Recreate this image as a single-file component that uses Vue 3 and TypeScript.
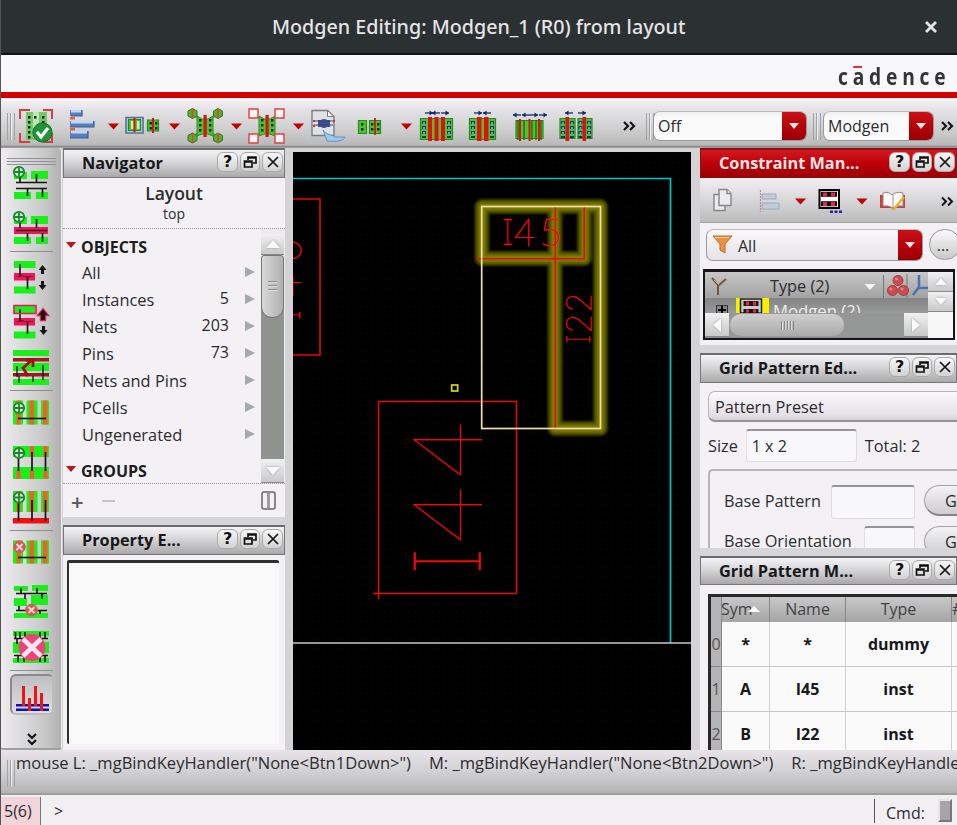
<script setup lang="ts">
interface Shape { d: string; fill?: string; stroke?: string; sw?: number }
interface Tool { x: number; w: number; shapes: Shape[]; arrow?: boolean }
interface SideTool { y: number; shapes: Shape[]; sep?: boolean; pressed?: boolean }

const GREEN = '#18f018'
const LEAF = '#4cc431'
const DARK = '#151515'
const PINK = '#f0145a'
const RED = '#e01010'

const box = (x: number, y: number, w: number, h: number): string => `M${x} ${y}h${w}v${h}h${-w}z`
const fill = (color: string, ...rects: number[][]): Shape => ({
  d: rects.map(([x, y, w, h]) => box(x, y, w, h)).join(''), fill: color,
})
const line = (color: string, sw: number, d: string): Shape => ({ d, stroke: color, sw })
const disc = (cx: number, cy: number, r: number, color: string, stroke?: string, sw?: number): Shape => ({
  d: `M${cx - r} ${cy}a${r} ${r} 0 1 0 ${2 * r} 0a${r} ${r} 0 1 0 ${-2 * r} 0z`, fill: color, stroke, sw,
})
const plus = (cx: number, cy: number): Shape[] => [
  disc(cx, cy, 5.2, '#d4f3d0', '#17862a', 1.8),
  line('#17862a', 1.8, `M${cx} ${cy - 4.5}v9M${cx - 4.5} ${cy}h9`),
]
const remove = (cx: number, cy: number): Shape[] => [
  disc(cx, cy, 5.8, '#dc5550', '#c46058', 1),
  line('#f8dede', 1.8, `M${cx - 3} ${cy - 3}l6 6M${cx + 3} ${cy - 3}l-6 6`),
]
const chip = (x: number, y: number, w: number, h: number): Shape[] => [
  { d: box(x + 0.5, y + 0.5, w - 1, h - 1), fill: LEAF, stroke: '#288a1c', sw: 1.2 },
]
const dots = (x: number, y: number, n: number): Shape =>
  fill('#10251a', ...Array.from({ length: n }, (_, i) => [x, y + i * 5, 2.4, 2.6]))
const smallArrow = (x: number, y: number, dir: number): Shape[] => [
  line('#0a2a70', 1.3, `M${x - 4} ${y}h8`),
  { d: `M${x + 4 * dir} ${y}l${-3.5 * dir} -2.6v5.2z`, fill: '#0a2a70' },
]
const blueDots = (x: number): Shape[] => [
  fill('#0c3560', [x - 2, 121, 4, 3], [x - 2, 126, 4, 3], [x - 2, 131, 4, 3], [x - 2, 136, 4, 2]),
  fill('#67a2e8', [x - 1, 122, 2, 2], [x - 1, 127, 2, 2], [x - 1, 132, 2, 2]),
]
const cross = (cx: number): Shape[] => [
  { d: `M${cx - 8} 116l5 3h6l5-3v20l-5-2h-6l-5 2z`, fill: LEAF, stroke: '#288a1c', sw: 1 },
  dots(cx - 6, 119, 3), dots(cx + 4, 119, 3),
  fill(RED, [cx - 1.5, 115, 3.2, 22]),
]
const hex = (cx: number, cy: number): Shape[] => [
  { d: `M${cx} ${cy - 5}l4.5 2.5v5l-4.5 2.5l-4.5-2.500v-5z`, fill: '#4bb336', stroke: '#287a20', sw: 1 },
  line('#e04a20', 1.8, `M${cx} ${cy - 5}v10`),
]

const tools: Tool[] = [
  { x: 16, w: 50, shapes: [
    line('#cf4040', 2, 'M20 119v-9h10M43 110h9v9M20 133v9h10M43 142h9v-9'),
    fill('#76c768', [26, 112, 21, 28]), fill('#bfe5b5', [33, 112, 6, 26]), dots(28, 116, 5), dots(42, 116, 4), dots(34, 116, 1),
    disc(42.5, 132.5, 9.6, '#209438', '#116d25', 1), line('#ffffff', 3.2, 'M37 132l4 5l7-9'),
  ] },
  { x: 66, w: 56, arrow: true, shapes: [
    fill('#567fc0', [70, 110, 12, 6], [70, 121, 24, 6], [70, 131, 18, 7]),
    fill('#bed9f5', [71, 110, 10, 2.4], [71, 121, 22, 2.4], [71, 131, 16, 2.6]),
    fill('#f4593b', [70, 117, 5, 2.6], [70, 128, 5, 2.6]),
    line('#405d98', 1.2, 'M82 110v6h-11M94 121v6h-24M88 131v7h-18'),
  ] },
  { x: 122, w: 61, arrow: true, shapes: [
    { d: box(126, 117.5, 17, 15.5), fill: '#b8cbe0', stroke: '#5770a0', sw: 1.6 },
    ...chip(128, 119, 13, 12), fill('#d7edbb', [131, 121, 2.5, 8], [137, 121, 2.5, 8]), line(RED, 2, 'M134.5 118v14'),
    ...chip(147, 119.5, 12, 12), dots(149.5, 122, 2), dots(155, 122, 2), line(RED, 2, 'M153 118v15'),
  ] },
  { x: 183, w: 62, arrow: true, shapes: [
    line('#81917f', 1.5, 'M192 113l26 25M218 113l-26 25'),
    ...cross(205), ...hex(192.5, 113.5), ...hex(218, 113.5), ...hex(192.5, 138), ...hex(218, 138),
  ] },
  { x: 245, w: 62, arrow: true, shapes: [
    ...cross(267), ...[[249, 109], [275, 109], [249, 134], [275, 134]].map(([x, y]) => ({
      d: box(x, y, 9, 9), fill: '#fff4f4', stroke: '#df3f3f', sw: 1.4 })),
  ] },
  { x: 307, w: 46, shapes: [
    { d: 'M312 110.5h15.5l6.5 6v19h-22z', fill: '#dfe1e3', stroke: '#757980', sw: 1.3 },
    { d: 'M327.5 110.5v6h6.5z', fill: '#ffffff', stroke: '#757980', sw: 1 },
    disc(324, 123.5, 4.6, '#3d4f91'), fill('#3d4f91', [318, 120, 12, 7]), line('#34447d', 1.2, 'M314 121h20M314 125h19'),
    line('#cc2f47', 2, 'M314 120v2M334 120v2M314 125v2'),
    { d: 'M323 130c3 5 8 4 12 7h10c-1 4-9 5-18 4z', fill: '#9fc7ec', stroke: '#4e86bd', sw: 0.8 },
  ] },
  { x: 353, w: 62, arrow: true, shapes: [
    ...chip(358, 120, 9, 14), dots(361, 123, 2), ...chip(369, 120, 12, 14), dots(371, 123, 2), dots(377, 123, 2),
    line(RED, 1.8, 'M375 118v17'),
  ] },
  { x: 415, w: 46, shapes: [
    ...smallArrow(429, 113, 1), ...smallArrow(436, 113, -1), ...smallArrow(445, 113, 1),
    ...chip(420, 118, 33, 22), ...blueDots(424), ...blueDots(449),
    fill(RED, [428, 117, 4, 24], [434.5, 117, 4, 24], [441, 117, 4, 24]),
  ] },
  { x: 461, w: 48, shapes: [
    ...smallArrow(478, 113, 1), ...smallArrow(487, 113, -1),
    ...chip(469, 118, 27, 22), ...blueDots(473), ...blueDots(492), fill(RED, [477, 117, 4.5, 24], [484, 117, 4.5, 24]),
  ] },
  { x: 509, w: 45, shapes: [
    ...smallArrow(517, 115, -1), ...smallArrow(526, 115, -1), ...smallArrow(534, 115, 1), ...smallArrow(543, 115, 1),
    ...chip(515.5, 120, 28, 19), line('#286a17', 1.4, 'M518 120v20M524 120v20M532 120v20M536 120v20M541 120v20'),
    line(RED, 2, 'M520 119v22M529.5 119v22M539 119v22'),
  ] },
  { x: 554, w: 60, shapes: [
    ...smallArrow(569, 113, -1), ...smallArrow(582, 113, 1),
    ...chip(559.5, 118, 16, 21), ...chip(577.5, 118, 15, 21), ...blueDots(563), ...blueDots(572), ...blueDots(580.500), ...blueDots(589),
    fill(RED, [565.5, 117, 3.6, 24], [582.5, 117, 3.6, 24]),
  ] },
]

const rows = (dy: number, wire: string): Shape[] => [
  fill(GREEN, [14, 172 + dy, 13, 7], [31, 171 + dy, 17, 8], [14, 192 + dy, 17, 7], [36, 192 + dy, 12, 7]),
  ...(wire === PINK ? [fill(PINK, [14, 227, 34, 7])] : []),
  line(DARK, 1.4, wire === PINK ? 'M16 230.5h31' : 'M16 182.5h31M16 188.5h31'),
  line(DARK, 1.6, `M20 ${176 + dy}v7M36.5 ${174 + dy}v9M27.5 ${188 + dy}v8M42.5 ${188 + dy}v9`),
]
const move = (dy: number): Shape[] => [
  fill(GREEN, [14, 261 + dy, 21.5, 7], [14, 286.5 + dy, 21.5, 7]),
  fill(PINK, [14, 273 + dy, 21, 7.5]), line('#7a0a30', 1.2, `M16 ${276.5 + dy}h4l2-1l2 1h9`),
  line(DARK, 1.6, `M20 ${264 + dy}v12M27.5 ${277 + dy}v12`),
]
const fingers = (y: number, h: number): Shape[] => [
  fill(GREEN, [13, y, 10, h], [26.5, y, 11, h], [41, y, 8, h]),
  fill('#f0602c', [16.5, y, 4, h], [29.5, y, 4.5, h], [43, y, 4.5, h]),
]

const sideTools: SideTool[] = [
  { y: 161, shapes: [...rows(0, DARK), ...plus(19, 172)] },
  { y: 206, sep: true, shapes: [...rows(45, PINK), ...plus(19, 217)] },
  { y: 255, shapes: [...move(0), { d: 'M42.5 265l-4 5h2.5v4h3v-4h2.5zM42.5 290l-4-5h2.5v-4h3v4h2.5z', fill: DARK }] },
  { y: 300, shapes: [
    ...move(45), line(PINK, 1.6, 'M14 305.5h22v8h-22z'),
    { d: 'M43 309.500l-4.500 5.500h2.500v5h4v-5h2.500z', fill: DARK, stroke: PINK, sw: 2.400 },
    { d: 'M43 309.500l-4.500 5.500h2.500v5h4v-5h2.500zM43.500 335l-4-5h2.500v-4h3v4h2.500z', fill: DARK },
  ] },
  { y: 345, sep: true, shapes: [
    fill(GREEN, [13, 350, 36, 6], [13, 363, 36, 8], [13, 379, 36, 6]),
    fill('#a01822', [13, 358, 36, 3.5], [13, 373, 36, 3.5]),
    line(DARK, 1.3, 'M17 366v11M19 376v7M33 376v6M43 365v15'),
    line('#a01010', 2.8, 'M28 376l-5-8l9-8M26 360h7v7'),
  ] },
  { y: 395, shapes: [...fingers(400.5, 24), line(DARK, 1.6, 'M18 418.5h28'), ...plus(19, 408)] },
  { y: 440, shapes: [
    fill(GREEN, [13, 446, 36, 11], [13, 467, 36, 12]),
    fill('#f0602c', [16.5, 470, 4, 9], [30, 446, 4, 11], [30, 470, 4, 9], [43.5, 446, 4, 11], [43.5, 470, 4, 9]),
    line(DARK, 1.7, 'M18.5 457v14M32 452v19M45.5 452v19'), ...plus(19, 453),
  ] },
  { y: 485, sep: true, shapes: [
    ...fingers(491, 21), fill('#f01010', [13, 518, 36, 5.5]), line(DARK, 1.7, 'M18.5 500v21M32 500v21M45.5 500v21'), ...plus(19, 497.5),
  ] },
  { y: 535, shapes: [...fingers(540.5, 23), line(DARK, 1.6, 'M18 557.5h28'), ...remove(19.5, 547)] },
  { y: 580, shapes: [
    fill(GREEN, [14, 586, 14, 5], [32, 585, 16, 6], [14, 598, 13, 8], [31, 595, 17, 10], [14, 613, 34, 5]),
    line(DARK, 1.6, 'M16 593.5h31M21 588v5M37 588v5M25 593v6M42 593v6M16 610.5h31M19 606v5M40 610v4'), ...remove(31.5, 610),
  ] },
  { y: 625, sep: true, shapes: [
    fill(GREEN, [13, 631, 36, 5], [13, 642, 36, 11], [13, 658, 36, 5]),
    line(DARK, 1.6, 'M14 638.5h34M14 655.5h34M15.5 632v7M20 632v6M25 632v6M40 632v6M45 632v6M17 638v6M18 655v7M24 655v7M40 655v7M45 655v7'),
    disc(32, 647.5, 13.500, '#ec4478'), line('#fbe8f2', 4.500, 'M23 639l18 17M41 639l-18 17'),
  ] },
  { y: 674, pressed: true, shapes: [
    fill('#1010b8', [16, 704, 33, 2.6], [16, 708.5, 33, 2.6]),
    fill('#f01414', [22, 686, 3, 20], [28, 698, 3, 13], [34, 686, 3, 20], [40, 693, 3, 18]),
  ] },
]

const objects = [
  { name: 'All', count: '' }, { name: 'Instances', count: '5' }, { name: 'Nets', count: '203' }, { name: 'Pins', count: '73' },
  { name: 'Nets and Pins', count: '' }, { name: 'PCells', count: '' }, { name: 'Ungenerated', count: '' },
]
const mapping = [
  { sym: '*', name: '*', type: 'dummy' }, { sym: 'A', name: 'I45', type: 'inst' }, { sym: 'B', name: 'I22', type: 'inst' },
]
const headButtons = ['?', 'restore', 'close']
</script>

<template>
  <div class="window">
    <header class="titlebar">
      <h1>Modgen Editing: Modgen_1 (R0) from layout</h1>
      <svg class="close" viewBox="0 0 14 14"><path d="M2 2l10 10M12 2L2 12" /></svg>
    </header>

    <div class="brandbar"><div class="brand">c<span class="macron">a</span>dence</div></div>

    <div class="toolbar">
      <i class="grip"></i>
      <div v-for="t in tools" :key="t.x" class="tool">
        <svg :width="t.w" height="50" :viewBox="`${t.x} 98 ${t.w} 50`">
          <path v-for="(s, i) in t.shapes" :key="i" :d="s.d" :fill="s.fill || 'none'" :stroke="s.stroke" :stroke-width="s.sw" />
          <path v-if="t.arrow" :d="`M${t.x + t.w - 14} 123.5h11l-5.5 6z`" fill="#c20000" />
        </svg>
      </div>
      <svg class="more" viewBox="0 0 13 10"><path d="M1 1l4 4-4 4M7 1l4 4-4 4" /></svg>
      <i class="grip second"></i>
      <div class="combo off"><span>Off</span><b></b></div>
      <i class="grip third"></i>
      <div class="combo modgen"><span>Modgen</span><b></b></div>
      <svg class="more last" viewBox="0 0 13 10"><path d="M1 1l4 4-4 4M7 1l4 4-4 4" /></svg>
    </div>

    <main class="body">
      <nav class="sidebar">
        <i class="hgrip"></i>
        <div v-for="s in sideTools" :key="s.y" class="side-tool" :class="{ sep: s.sep, pressed: s.pressed }">
          <svg width="62" height="45" :viewBox="`0 ${s.y} 62 45`">
            <path v-for="(p, i) in s.shapes" :key="i" :d="p.d" :fill="p.fill || 'none'" :stroke="p.stroke" :stroke-width="p.sw" />
          </svg>
        </div>
        <svg class="more down" viewBox="0 0 10 13"><path d="M1 1l4 4 4-4M1 7l4 4 4-4" /></svg>
      </nav>

      <section class="dock left">
        <div class="head"><h2>Navigator</h2>
          <span v-for="b in headButtons" :key="b" class="hb">
            <template v-if="b === '?'">?</template>
            <svg v-else-if="b === 'restore'" viewBox="0 0 14 14"><path d="M5 5V2h8v6h-3M5 3h8M1.500 6h7.500v6H1.500zM1 7h8" /></svg>
            <svg v-else viewBox="0 0 14 14"><path d="M2 2l10 10M12 2L2 12" /></svg>
          </span>
        </div>
        <div class="scope"><strong>Layout</strong><span>top</span></div>
        <div class="nav">
          <div class="tree">
            <div class="group"><i></i>OBJECTS</div>
            <div v-for="o in objects" :key="o.name" class="obj"><span>{{ o.name }}</span><em>{{ o.count }}</em><i></i></div>
            <div class="group second"><i></i>GROUPS</div>
          </div>
          <div class="scroll"><div class="sb up"></div><div class="thumb"><i></i></div><div class="track"></div><div class="sb dn"></div></div>
        </div>
        <div class="nav-actions"><b>+</b><i></i>
          <svg width="15" height="19" viewBox="0 0 15 19"><rect x="1" y="1" width="13" height="17" rx="2" /><path d="M7.500 2v15" stroke-width="3" stroke-opacity=".6" /></svg></div>
        <div class="head prop"><h2>Property E...</h2>
          <span v-for="b in headButtons" :key="b" class="hb">
            <template v-if="b === '?'">?</template>
            <svg v-else-if="b === 'restore'" viewBox="0 0 14 14"><path d="M5 5V2h8v6h-3M5 3h8M1.500 6h7.500v6H1.500zM1 7h8" /></svg>
            <svg v-else viewBox="0 0 14 14"><path d="M2 2l10 10M12 2L2 12" /></svg>
          </span>
        </div>
        <div class="prop-body"></div>
      </section>

      <svg class="canvas" viewBox="293 152 398 598">
        <defs>
          <pattern id="grid" width="6" height="9" patternUnits="userSpaceOnUse"><rect width="1" height="1" fill="#101010" /></pattern>
          <filter id="soft" x="-20%" y="-20%" width="140%" height="140%"><feGaussianBlur stdDeviation="1.3" /></filter>
        </defs>
        <rect x="293" y="152" width="398" height="598" fill="url(#grid)" />
        <path d="M293 178.5H670.5V643" class="cyan" />
        <path d="M293 643H691" class="pale" />
        <path d="M293 199H320V355H293" class="red" />
        <g filter="url(#soft)" class="glow" stroke-linejoin="round">
          <path d="M482 206.5H584.5V258.5H482zM555 206.5H600.5V428.5H555z" stroke="#3a3a00" stroke-width="15" />
          <path d="M482 206.5H584.5V258.5H482zM555 206.5H600.5V428.5H555z" stroke="#5c5c00" stroke-width="11" />
          <path d="M482 206.5H584.5V258.5H482zM555 206.5H600.5V428.5H555z" stroke="#808000" stroke-width="6" />
        </g>
        <path d="M378.5 599V401.5H516.5V593.5H373" class="red" />
        <path d="M476 258.8H584.3V206M555.3 206V430" class="red" />
        <rect x="481.7" y="206.5" width="118.8" height="222" class="wheat" />
        <rect x="451.7" y="385" width="6" height="6" class="yellow" />
        <g class="labels">
          <text class="mono thin" transform="translate(483.5 577) rotate(-90) scale(.47 1)" font-size="112">I</text>
          <text class="big" transform="translate(482 543) rotate(-90) scale(1 1)" font-size="98">4</text>
          <text class="big" transform="translate(482 478) rotate(-90) scale(1 1)" font-size="98">4</text>
          <text class="mono fine" transform="translate(501 246) scale(.52 1)" font-size="42">I</text>
          <text transform="translate(514 246)" font-size="37">4</text>
          <text transform="translate(539 246) scale(1.1 1)" font-size="37">5</text>
          <text class="mono fine" transform="translate(590.5 344) rotate(-90) scale(.42 1)" font-size="38">I</text>
          <text transform="translate(590.5 333) rotate(-90) scale(.92 1)" font-size="35">2</text>
          <text transform="translate(590.5 312) rotate(-90) scale(.92 1)" font-size="35">2</text>
          <text class="mono fine" transform="translate(300.5 320) rotate(-90) scale(.42 1)" font-size="41">I</text>
          <text transform="translate(300.5 297) rotate(-90)" font-size="37">4</text>
          <text transform="translate(300.5 261) rotate(-90)" font-size="37">0</text>
        </g>
      </svg>

      <section class="dock right">
        <div class="head active"><h2>Constraint Man...</h2>
          <span v-for="b in headButtons" :key="b" class="hb">
            <template v-if="b === '?'">?</template>
            <svg v-else-if="b === 'restore'" viewBox="0 0 14 14"><path d="M5 5V2h8v6h-3M5 3h8M1.500 6h7.500v6H1.500zM1 7h8" /></svg>
            <svg v-else viewBox="0 0 14 14"><path d="M2 2l10 10M12 2L2 12" /></svg>
          </span>
        </div>
        <svg class="cm-tools" viewBox="700 178 257 44">
          <g fill="#ececee" stroke="#85858a" stroke-width="1.4">
            <path d="M714 194.500h11v16h-11z" /><path d="M719 189.500h8l4 4v12h-12z" /><path d="M727 189.500v4h4" />
          </g>
          <path d="M760.500 190v22" stroke="#cf8780" stroke-width="1.2" stroke-dasharray="2 1" />
          <path d="M762 194h14v5h-14zM762 203h17v6h-17z" fill="#c0ccda" stroke="#9aacbf" />
          <path d="M795 198.500h11l-5.500 6zM856.500 198.500h11l-5.500 6z" fill="#c20000" />
          <path d="M819.500 190h19.500v18h-19.500z" fill="#fff" stroke="#000" stroke-width="2" />
          <path d="M821 191.800h16v5h-16zM821 201.200h16v5h-16z" fill="#000" />
          <path d="M823 192.500h4v4h-4zM831 192.500h4v4h-4zM823 202h4v4h-4zM831 202h4v4h-4z" fill="#f02048" />
          <path d="M830 210.500h3v2.600h-3zM834.500 210.500h3v2.600h-3zM839 210.500h3v2.600h-3z" fill="#2222a8" />
          <path d="M880 195v13h11l2 1l2-1h10v-13" fill="#c63e3e" />
          <path d="M883 193q6-2 9 2q4-4 11-2v13q-6-1-10 2q-5-3-10-2z" fill="#fafafa" stroke="#9b8585" />
          <path d="M893 195v13" stroke="#999" /><path d="M893 210l11-13" stroke="#e3b133" stroke-width="2.600" />
          <path d="M942 197.500l4 4-4 4M948 197.500l4 4-4 4" fill="none" stroke="#111" stroke-width="2" />
        </svg>
        <div class="filter-row">
          <div class="combo filter">
            <svg width="21" height="20" viewBox="0 0 21 20"><path d="M1 1h19l-7 8v9l-5-3V9z" fill="#e8923c" stroke="#b8702c" /><path d="M3 2.500h14" stroke="#fbd09b" /></svg>
            <span>All</span><b></b></div>
          <div class="round">...</div>
        </div>
        <div class="ctree">
          <svg class="ctree-ic" width="249" height="66" viewBox="705 272 249 66">
            <path d="M712 278l6 7v10M726 279l-8 7" fill="none" stroke="#70573f" stroke-width="2" />
            <path d="M714 280l5 5" stroke="#d0a060" />
            <path d="M864.500 284h11l-5.500 6z" fill="#f4f4f4" /><path d="M883.500 275v23M907 274v24" stroke="#777" />
            <g fill="#cc4c50" stroke="#a13a3c"><circle cx="898" cy="280.500" r="5" /><circle cx="892.500" cy="290.500" r="5" /><circle cx="903.500" cy="290.500" r="5" /></g>
            <g fill="#e78288"><circle cx="896.500" cy="279" r="1.500" /><circle cx="891" cy="289" r="1.500" /><circle cx="902" cy="289" r="1.500" /></g>
            <path d="M919 275v12l-6 8M919 288h9" fill="none" stroke="#4b70b4" stroke-width="2.500" />
            <path d="M716.500 305.500h11v9h-11z" fill="#888" stroke="#333" /><path d="M718 310h8M722 306v7" stroke="#000" stroke-width="2" />
            <path d="M736 298h33v15h-33z" fill="#f8f000" /><path d="M740.500 299h21v14h-21z" fill="#ccc" stroke="#222" stroke-width="1.500" />
            <path d="M743.500 301h15v5h-15zM743.500 309h15v4h-15z" fill="#181818" />
            <path d="M746 301.500h3v4h-3zM753 301.500h3v4h-3zM746 309.500h3v3h-3zM753 309.500h3v3h-3z" fill="#e02848" />
          </svg>
          <div class="c-head">Type (2)</div>
          <div class="c-row">Modgen (2)</div>
          <div class="c-scroll"><div class="sb lf"></div><div class="hthumb"><i></i></div><div class="sb rt"></div></div>
          <div class="c-vert"><div class="sb up"></div><div class="sb dn"></div></div>
        </div>

        <div class="head second"><h2>Grid Pattern Ed...</h2>
          <span v-for="b in headButtons" :key="b" class="hb">
            <template v-if="b === '?'">?</template>
            <svg v-else-if="b === 'restore'" viewBox="0 0 14 14"><path d="M5 5V2h8v6h-3M5 3h8M1.500 6h7.500v6H1.500zM1 7h8" /></svg>
            <svg v-else viewBox="0 0 14 14"><path d="M2 2l10 10M12 2L2 12" /></svg>
          </span>
        </div>
        <div class="editor">
          <div class="preset">Pattern Preset</div>
          <div class="size"><span>Size</span><div class="field">1 x 2</div><span>Total: 2</span></div>
          <div class="base">
            <div class="line"><span>Base Pattern</span><div class="field"></div><div class="go">G</div></div>
            <div class="line low"><span>Base Orientation</span><div class="field"></div><div class="go">G</div></div>
          </div>
        </div>

        <div class="head third"><h2>Grid Pattern M...</h2>
          <span v-for="b in headButtons" :key="b" class="hb">
            <template v-if="b === '?'">?</template>
            <svg v-else-if="b === 'restore'" viewBox="0 0 14 14"><path d="M5 5V2h8v6h-3M5 3h8M1.500 6h7.500v6H1.500zM1 7h8" /></svg>
            <svg v-else viewBox="0 0 14 14"><path d="M2 2l10 10M12 2L2 12" /></svg>
          </span>
        </div>
        <div class="map">
          <div class="tr th"><i></i><span class="symh"><u>Sym</u></span><span>Name</span><span>Type</span><span class="hash">#</span></div>
          <div v-for="(m, i) in mapping" :key="i" class="tr"><i><u>{{ i }}</u></i><b>{{ m.sym }}</b><b>{{ m.name }}</b><b>{{ m.type }}</b><b></b></div>
        </div>
      </section>
    </main>

    <div class="mouse"><i class="grip"></i>
      <span>mouse L: _mgBindKeyHandler("None&lt;Btn1Down&gt;")</span>
      <span>M: _mgBindKeyHandler("None&lt;Btn2Down&gt;")</span>
      <span>R: _mgBindKeyHandler("None&lt;Btn3Down&gt;")</span></div>
    <footer class="status"><div class="num">5(6)</div><div class="prompt">&gt;</div><div class="cmd">Cmd:<i></i></div></footer>
  </div>
</template>

<style>
body { margin: 0; overflow: hidden; }
</style>

<style scoped>
* { box-sizing: border-box; }
.window { width: 957px; height: 825px; overflow: hidden; display: flex; flex-direction: column; background: #d6d5d7; color: #2b2c2f; font: 16px/20px "Open Sans", "Noto Sans", sans-serif; border-left: 1px solid #555; }
.window > * { flex: none; margin-left: -1px; }
.titlebar { height: 55px; background: #2b3132; border-bottom: 2px solid #101415; display: flex; align-items: center; padding: 1px 19px 0 272px; color: #e6e4e6; }
.titlebar h1 { margin: 0; flex: 1; font: 500 19.700px/24px "Noto Sans", sans-serif; white-space: nowrap; }
.close { width: 14px; height: 14px; fill: none; stroke: #e6e4e6; stroke-width: 2.800; }
.brandbar { height: 43px; background: #f8f7f9; border-bottom: 6px solid #d20000; display: flex; justify-content: flex-end; }
.brand { width: 119px; font: 700 24px/41px "Open Sans", sans-serif; letter-spacing: 6px; color: #343438; transform: scaleX(.8); transform-origin: 0 0; white-space: nowrap; }
.macron { position: relative; }
.macron::after { content: ""; position: absolute; left: 1px; top: 7px; width: 11px; height: 2px; background: #e0303c; }
.toolbar { height: 50px; background: linear-gradient(#f7f4f8 0, #e3e1e4 25%, #d0d0d1 60%, #b9b9ba 94%, #8c8c8c 97%, #aaa); display: flex; align-items: center; }
.grip { flex: none; width: 8px; height: 27px; margin: 7px 0 0 7px; border: solid #a2a2a4; border-width: 0 1px; background: linear-gradient(90deg, transparent 2px, #a2a2a4 2px 3px, #eee 3px 4px, transparent 4px); }
.toolbar > .tool { height: 50px; }
.toolbar > .grip + .tool { margin-left: 1px; }
.more { width: 13px; height: 10px; margin: 6px 0 0 9px; fill: none; stroke: #141414; stroke-width: 2.200; flex: none; }
.grip.second { margin-left: 10px; }
.grip.third { margin-left: 6px; }
.combo { display: flex; align-items: stretch; height: 30px; overflow: hidden; border: 1px solid #9a9a9b; border-top-color: #bbb; border-radius: 7px; background: linear-gradient(#f0f0f1, #f9f9fa 20%); line-height: 29px; flex: none; }
.combo span { flex: 1; padding-left: 4px; }
.combo b { width: 24px; background: linear-gradient(#cb1018, #b00008 65%, #980006); display: flex; align-items: center; justify-content: center; }
.combo b::after { content: ""; border: 5.500px solid transparent; border-top: 6px solid #f8e5e5; border-bottom: 0; }
.off { width: 154px; margin-top: 5px; margin-left: -1px; }
.modgen { width: 111px; margin: 5px 0 0 2px; }
.more.last { margin-left: 7px; }

.body { height: 602px; display: flex; background: #d3d3d5; }
.sidebar { width: 62px; margin-right: 1px; display: flex; flex-direction: column; background: linear-gradient(90deg, #f0edf1, #dcdbdd 35%, #c7c7c8 75%, #b1b1b2); border-right: 1px solid #eee; border-bottom: 2px solid #a0a0a1; border-radius: 4px; }
.hgrip { height: 7px; width: 49px; margin: 10px 0 -4px 7px; border: solid #929294; border-width: 1px 0; background: linear-gradient(transparent 2px, #929294 2px 3px, transparent 3px); flex: none; }
.side-tool { height: 45px; flex: none; }
.side-tool svg { display: block; }
.side-tool.sep { height: 49px; background: linear-gradient(#8d8d8f, #8d8d8f) 10px 45px / 43px 1px no-repeat; }
.side-tool.sep:nth-of-type(5), .side-tool.sep:nth-of-type(8) { height: 50px; }
.side-tool.pressed { width: 44px; margin-left: 10px; height: 41px; border: 2px solid #8a8a8b; border-right-color: #bbb; border-bottom-color: #bbb; border-radius: 6px; background: linear-gradient(#bfbfc1, #dedddf); }
.side-tool.pressed svg { margin: -2px 0 0 -12px; }
.more.down { width: 10px; height: 13px; margin: 18px 0 0 27px; }

.dock { display: flex; flex-direction: column; background: #f3f1f4; overflow: hidden; flex: none; }
.left { width: 222px; margin-right: 8px; }
.head { height: 30px; flex: none; display: flex; padding: 2px 1px 0 18px; gap: 2px; border: 1px solid #77777a; border-top: 2px solid #6b6b6e; background: linear-gradient(#f4f3f5, #d6d5d7 45%, #a9a9aa); }
.head h2 { margin: 1px 0 0; flex: 1; font-size: 16.300px; line-height: 20px; font-weight: 700; color: #17181a; white-space: nowrap; }
.hb { width: 20.600px; height: 20px; border: 1px solid #aaa; border-radius: 6px; background: linear-gradient(#f7f7f8, #d2d2d3); display: flex; align-items: center; justify-content: center; font: 700 16px/18px "DejaVu Sans", sans-serif; color: #101010; flex: none; }
.hb svg { width: 14px; height: 14px; fill: none; stroke: #111; stroke-width: 1.700; }
.scope { height: 51px; flex: none; display: flex; flex-direction: column; align-items: center; border-bottom: 1px dotted #999; padding-top: 5px; }
.scope strong { font-weight: 600; font-size: 17.500px; line-height: 21px; }
.scope span { font-size: 14px; line-height: 19px; }
.nav { height: 255px; flex: none; display: flex; border-bottom: 1px dotted #999; overflow: hidden; }
.tree { flex: 1; padding-top: 6px; }
.group { height: 24px; display: flex; align-items: center; font-weight: 700; font-size: 16px; color: #1d1e20; }
.group i { width: 0; border: 5.500px solid transparent; border-top: 6px solid #c41010; border-bottom: 0; margin: -4px 5px 0 3px; }
.obj { height: 27px; display: flex; align-items: center; padding-left: 19px; }
.obj span { flex: 1; font-size: 16.400px; }
.obj em { font-style: normal; margin: -4px 16px 0 0; }
.obj i { width: 0; border: 5px solid transparent; border-left: 10px solid #a4aaa5; border-right: 0; margin: -1px 6px 0 0; }
.group.second { margin-top: 11px; }
.scroll { width: 24px; padding: 5px 1px 0 0; display: flex; flex-direction: column; background: #eceaed; }
.sb { display: flex; align-items: center; justify-content: center; background: linear-gradient(#f1f0f2, #c9c9ca); height: 21px; border-bottom: 1px solid #888; flex: none; }
.sb::after { content: ""; border: 7px solid transparent; border-bottom: 8px solid #fafafa; border-top: 0; filter: drop-shadow(0 0 1px #999); }
.sb.dn { height: 24px; }
.sb.dn::after { transform: scaleY(-1); }
.thumb { position: relative; height: 63px; flex: none; border: 1px solid #777; border-radius: 3px 3px 11px 11px; background: linear-gradient(90deg, #d9d9da, #b0b0b1); display: flex; align-items: center; justify-content: center; }
.thumb i { width: 9px; height: 12px; background: repeating-linear-gradient(#8d8d8e 0 1px, #ddd 1px 2px, transparent 2px 4px); }
.track { flex: 1; margin-top: -12px; background: #8f928f; }
.nav-actions { height: 33px; flex: none; display: flex; align-items: center; padding: 0 9px 0 8px; gap: 18px; }
.nav-actions b { font: 600 22px/22px "Noto Sans", sans-serif; color: #5d5d60; }
.nav-actions i { width: 13px; height: 2px; background: #c5c5c7; }
.nav-actions svg { margin-left: auto; fill: none; stroke: #66666a; stroke-width: 1.500; }
.prop { box-shadow: 0 -8px 0 #d6d6d8; margin-top: 8px; }
.prop-body { flex: 1; margin: 5px 6px 6px 4px; background: #f9f9fa; border: solid #303032; border-width: 3px 0 0 2px; border-radius: 2px; }

.canvas { width: 398px; height: 598px; margin-top: 4px; background: #000; flex: none; fill: none; }
.cyan { stroke: #00c4ca; stroke-width: 1.700; }
.pale { stroke: #c9c9cc; stroke-width: 1.700; }
.red { stroke: #e80808; stroke-width: 1.600; }
.wheat { stroke: #f4dcae; stroke-width: 1.700; }
.yellow { stroke: #d8d800; stroke-width: 1.700; }
.labels { fill: #f00a0a; stroke: #f00a0a; stroke-width: .7; font-family: Lato, sans-serif; font-weight: 100; }
.labels .big { stroke-width: .3; }
.labels .mono { font-family: "Liberation Mono", monospace; font-weight: 400; }
.labels .thin { stroke: #000; stroke-width: 6.300; }
.labels .fine { stroke: #000; stroke-width: 1.500; }

.right { width: 257px; margin-left: 9px; }
.active { background: linear-gradient(#d31920, #bd0009 50%, #9c0006); border-color: #8c1014; }
.active h2 { color: #f7e6e7; }
.cm-tools { width: 257px; height: 45px; flex: none; background: linear-gradient(#f1eff2, #dddcde 40%, #bbbbbc); border-bottom: 1px solid #a1a1a2; fill: none; }
.filter-row { display: flex; gap: 6px; padding: 6px 0 0 6px; flex: none; }
.filter { width: 217px; height: 32px; align-items: stretch; padding-left: 5px; background: linear-gradient(#f9f8fa, #e7e3e8); line-height: 33px; }
.filter svg { margin-top: 5px; flex: none; }
.filter span { padding-left: 5px; }
.round { width: 32px; height: 31px; border-radius: 16px; border: 1px solid #999; background: linear-gradient(#fafafa, #c9c9ca); padding-right: 4px; text-align: center; line-height: 31px; flex: none; }
.ctree { position: relative; width: 252px; height: 71px; margin: 8px 0 0 3px; border: 2px solid #171719; border-top-width: 3px; background: #8f8f90; flex: none; overflow: hidden; }
.ctree-ic { position: absolute; left: 0; top: 0; }
.c-head { height: 26px; padding-left: 65px; background: linear-gradient(#c7c7c8, #a2a2a3); font-size: 16.300px; line-height: 29px; }
.c-row { height: 15px; overflow: hidden; padding-left: 68px; color: #eee; line-height: 26px; font-size: 16.700px; background: linear-gradient(#858586, #999); }
.c-scroll { position: relative; height: 24px; width: 223px; display: flex; background: #959796; }
.c-scroll .sb { width: 24px; height: 24px; }
.c-scroll .lf::after { transform: rotate(-90deg); }
.c-scroll .rt::after { transform: rotate(90deg); }
.hthumb { width: 116px; margin-right: auto; border-radius: 12px; border: 1px solid #999; background: linear-gradient(#cfcfd0, #aaaaab); display: flex; align-items: center; justify-content: center; }
.hthumb i { width: 13px; height: 9px; background: repeating-linear-gradient(90deg, #858586 0 1px, #ddd 1px 2px, transparent 2px 3px); }
.c-vert { position: absolute; right: 0; top: 0; width: 25px; height: 66px; background: #f7f7f8; }
.c-vert .sb { height: 20px; }
.c-vert .sb::after { border-width: 0 6px 7px; }
.second.head, .third.head { box-shadow: 0 -8px 0 #d6d6d8; }
.second.head { margin-top: 13px; }
.editor { height: 165px; flex: none; padding: 8px 0 0 8px; overflow: hidden; }
.preset { width: 270px; height: 31px; border: 1px solid #b5b5b6; border-bottom: 2px solid #939593; border-radius: 7px; background: linear-gradient(#f9f9fa, #e6e1e7 80%, #d5d3d6); padding-left: 6px; font-size: 16.300px; line-height: 30px; }
.size { display: flex; align-items: center; gap: 8px; margin-top: 7px; white-space: nowrap; }
.size span { font-size: 16.300px; }
.field { background: #f8f8fa; border: 1px solid #dedde0; border-top: 2px solid #949695; border-radius: 3px; flex: none; }
.size .field { width: 111px; height: 33px; padding-left: 5px; line-height: 31px; }
.base { width: 270px; height: 100px; margin-top: 7px; border: 1px solid #b5b5b6; border-width: 2px 0 0 2px; border-radius: 5px 0 0 0; padding: 14px 0 0 14px; }
.line { display: flex; height: 34px; white-space: nowrap; font-size: 16.300px; line-height: 33px; }
.line span { width: 107px; flex: none; }
.line .field { width: 84px; }
.line.low { margin-top: 7px; line-height: 31px; }
.line.low span { width: 140px; }
.line.low .field { width: 51px; }
.go { width: 60px; height: 31px; margin-left: 9px; padding-left: 20px; line-height: 30px; border: 1px solid #a2a2a3; border-bottom: 2px solid #858585; border-radius: 16px; background: linear-gradient(#f3f2f4, #cfcdd0); flex: none; }
.third.head { margin-top: 8px; height: 29px; }
.map { flex: none; margin: 9px 0 0 8px; border: 3px solid #29292b; border-right: 0; width: 260px; background: #fafafa; }
.tr { display: grid; grid-template-columns: 11px 48px 76px 106px 20px; height: 45px; line-height: 44px; }
.tr > * { border-right: 1px solid #cfcfd1; border-bottom: 1px solid #c5c5c7; text-align: center; overflow: hidden; }
.tr > i { font-style: normal; background: #b5b5b6; border-color: #888; color: #555; }
.tr u { text-decoration: none; }
.tr i u { margin: 0 -3px; }
.tr b { color: #17181a; }
.th { height: 25px; line-height: 25px; background: linear-gradient(#c9c9ca, #a5a5a6); color: #424245; }
.th > * { background: none; border-color: #88888a; border-bottom: 0; }
.th > .hash { text-align: left; }
.symh { position: relative; text-align: left; }
.symh u { margin-left: -1px; }
.symh::after { content: ""; position: absolute; left: 26px; top: 9px; border: 6px solid transparent; border-bottom: 6px solid #fafafa; border-top: 0; }

.mouse { height: 45px; display: flex; gap: 18px; white-space: nowrap; font-size: 16.540px; line-height: 25px; background: linear-gradient(#e8e3e9, #d4d3d5 45%, #b4b4b5); border-bottom: 2px solid #9d9d9e; overflow: hidden; }
.mouse .grip { margin: 10px -17px 0 7px; }
.status { height: 30px; display: flex; background: #f2eff3; line-height: 32px; }
.num { width: 41px; margin-top: 2px; padding-left: 4px; line-height: 29px; background: #f2d5da; border-right: 1px solid #777; }
.prompt { padding-left: 13px; flex: 1; }
.cmd { width: 83px; margin: 4px 0 2px; padding-left: 11px; line-height: 28px; border-left: 1px solid #555; display: flex; }
.cmd i { width: 14px; height: 23px; margin: 0 0 0 13px; background: #a5a5a6; border: 2px solid #e5e5e6; border-right-color: #777; border-bottom-color: #777; }
</style>
